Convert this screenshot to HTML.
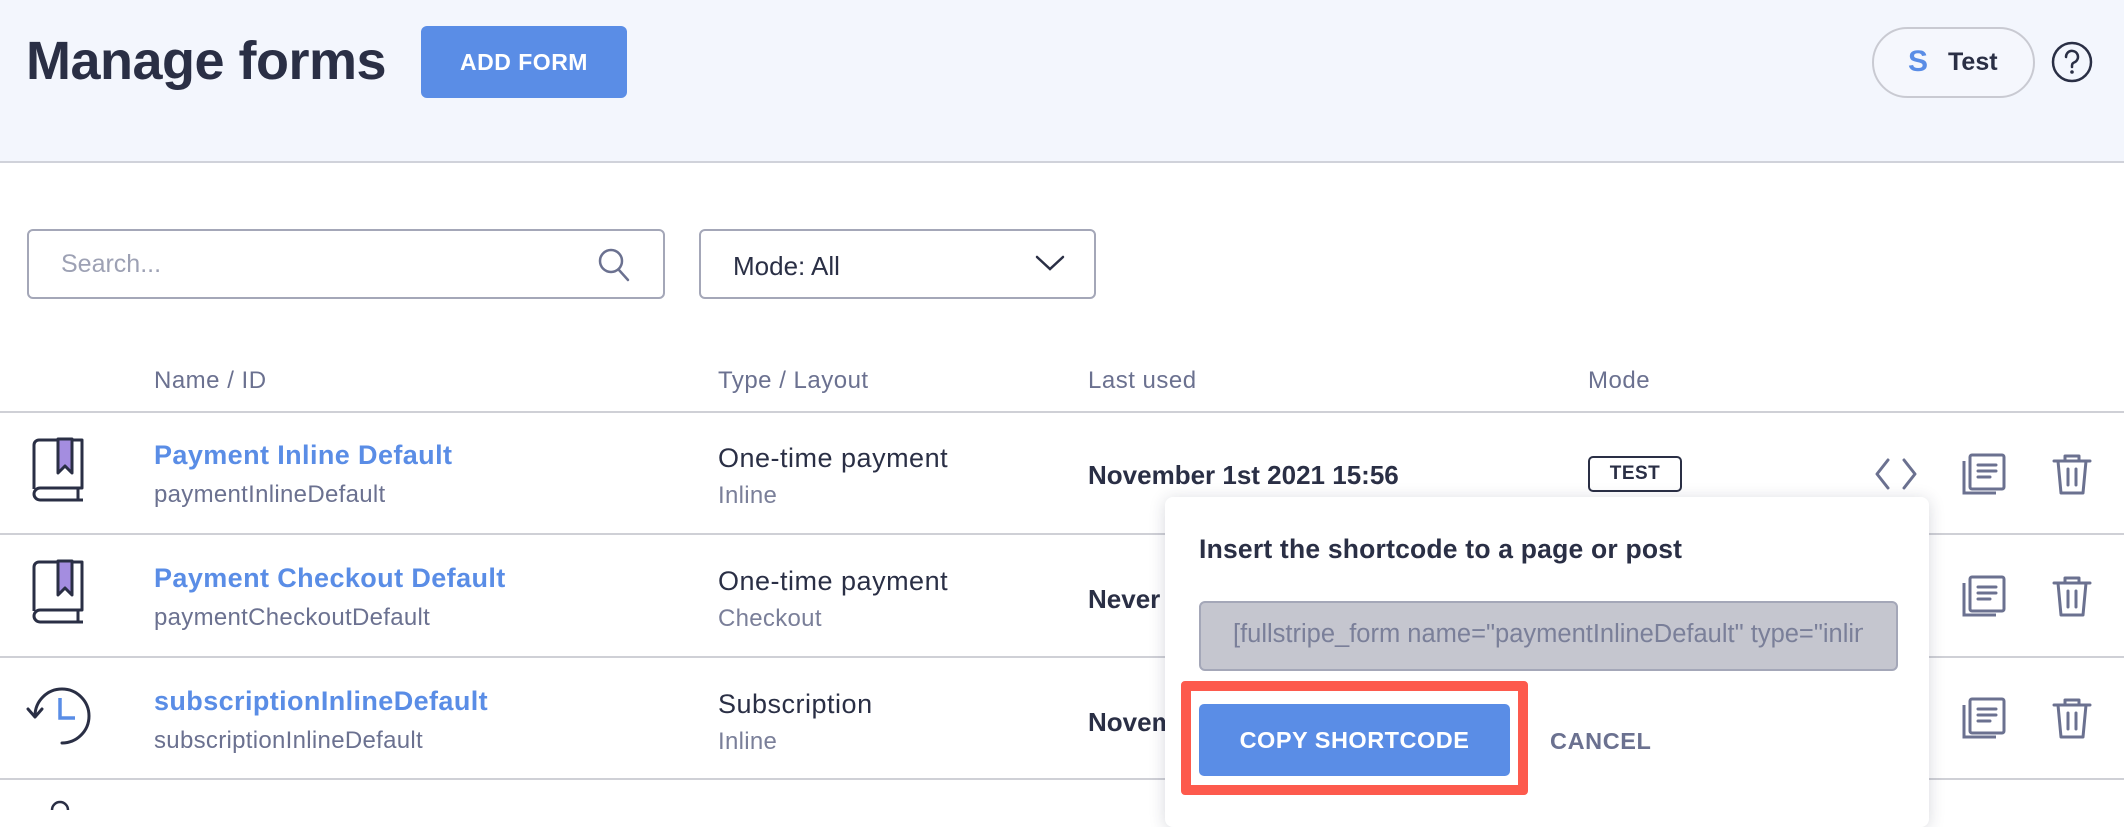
<!DOCTYPE html>
<html><head><meta charset="utf-8"><style>
*{margin:0;padding:0;box-sizing:border-box}
body{width:2124px;height:810px;overflow:hidden;background:#fff;font-family:"Liberation Sans",sans-serif;color:#2a2f45;position:relative}
.a{position:absolute;white-space:nowrap}
.hdr{left:0;top:0;width:2124px;height:163px;background:#f3f6fd;border-bottom:2px solid #d0d2da}
.line{left:0;width:2124px;height:2px;background:#cfd0d6}
.name{font-size:27px;font-weight:bold;color:#5a8de6;letter-spacing:.4px}
.id{font-size:24px;color:#6b7190;letter-spacing:.3px}
.t1{font-size:27px;color:#2a2f45;letter-spacing:.5px}
.t2{font-size:24px;color:#7a7f99;letter-spacing:.3px}
.th{font-size:24px;color:#6b7190;top:367px;letter-spacing:.5px}
.date{font-size:26px;font-weight:bold;color:#2a2f45;letter-spacing:0}
</style></head><body>
<div class="a hdr"></div>
<div class="a" style="left:26px;top:30px;font-size:54px;font-weight:bold;color:#2a2f45;letter-spacing:-.5px">Manage forms</div>
<div class="a" style="left:421px;top:26px;width:206px;height:72px;background:#5a8de6;border-radius:6px;color:#fff;font-weight:bold;font-size:23px;text-align:center;line-height:72px;letter-spacing:.5px">ADD FORM</div>
<div class="a" style="left:1872px;top:27px;width:163px;height:71px;border:2px solid #c9cad2;border-radius:36px;background:#f5f7fd"></div>
<div class="a" style="left:1908px;top:45px;font-size:30px;font-weight:bold;color:#5a8de6">S</div>
<div class="a" style="left:1948px;top:48px;font-size:25px;font-weight:bold;color:#2a2f45">Test</div>
<svg class="a" style="left:2051px;top:41px" width="42" height="42" viewBox="0 0 42 42"><circle cx="21" cy="21" r="19" fill="none" stroke="#2a2f45" stroke-width="2.5"/><path d="M15 16a6 6 0 1 1 8 5.5c-1.5.7-2 1.5-2 3v1.5" fill="none" stroke="#2a2f45" stroke-width="2.5" stroke-linecap="round"/><circle cx="21" cy="31" r="1.8" fill="#2a2f45"/></svg>

<div class="a" style="left:27px;top:229px;width:638px;height:70px;border:2px solid #a4a7b8;border-radius:6px"></div>
<div class="a" style="left:61px;top:250px;font-size:25px;color:#9da1b4">Search...</div>
<svg class="a" style="left:596px;top:246px" width="36" height="38" viewBox="0 0 36 38"><circle cx="15" cy="15" r="11" fill="none" stroke="#6b7190" stroke-width="2.5"/><path d="M23 24l9 10" stroke="#6b7190" stroke-width="2.5" stroke-linecap="round"/></svg>
<div class="a" style="left:699px;top:229px;width:397px;height:70px;border:2px solid #a4a7b8;border-radius:6px"></div>
<div class="a" style="left:733px;top:251px;font-size:26px;color:#2a2f45">Mode: All</div>
<svg class="a" style="left:1034px;top:253px" width="32" height="20" viewBox="0 0 32 20"><path d="M3 4l13 12 13-12" fill="none" stroke="#2a2f45" stroke-width="2.5" stroke-linecap="round"/></svg>

<div class="a th" style="left:154px">Name / ID</div>
<div class="a th" style="left:718px">Type / Layout</div>
<div class="a th" style="left:1088px">Last used</div>
<div class="a th" style="left:1588px">Mode</div>

<div class="a line" style="top:411px"></div>
<div class="a line" style="top:533px"></div>
<div class="a line" style="top:656px"></div>
<div class="a line" style="top:778px"></div>

<svg class="a" style="left:30px;top:436px" width="56" height="68" viewBox="0 0 56 68"><path d="M4 53V9a5 5 0 0 1 5-5h43v48H10a6 6 0 0 0 0 12h43" fill="none" stroke="#2a2f45" stroke-width="3" stroke-linejoin="round"/><path d="M48 52v12" stroke="#2a2f45" stroke-width="3"/><path d="M28 3h14v34l-7-7-7 7z" fill="#a48de0" stroke="#2a2f45" stroke-width="3" stroke-linejoin="round"/></svg>
<svg class="a" style="left:30px;top:558px" width="56" height="68" viewBox="0 0 56 68"><path d="M4 53V9a5 5 0 0 1 5-5h43v48H10a6 6 0 0 0 0 12h43" fill="none" stroke="#2a2f45" stroke-width="3" stroke-linejoin="round"/><path d="M48 52v12" stroke="#2a2f45" stroke-width="3"/><path d="M28 3h14v34l-7-7-7 7z" fill="#a48de0" stroke="#2a2f45" stroke-width="3" stroke-linejoin="round"/></svg>
<svg class="a" style="left:24px;top:684px" width="70" height="66" viewBox="0 0 70 66"><path d="M11 32A27 27 0 1 1 38 59" fill="none" stroke="#2a2f45" stroke-width="3" stroke-linecap="round"/><path d="M4 25l7 8 7-8" fill="none" stroke="#2a2f45" stroke-width="3" stroke-linecap="round" stroke-linejoin="round"/><path d="M36 14v20h15" fill="none" stroke="#5a8de6" stroke-width="3.5"/></svg>
<svg class="a" style="left:50px;top:800px" width="20" height="10"><circle cx="10" cy="10" r="8" fill="none" stroke="#2a2f45" stroke-width="2.5"/></svg>

<div class="a name" style="left:154px;top:440px">Payment Inline Default</div>
<div class="a id" style="left:154px;top:481px">paymentInlineDefault</div>
<div class="a name" style="left:154px;top:563px">Payment Checkout Default</div>
<div class="a id" style="left:154px;top:604px">paymentCheckoutDefault</div>
<div class="a name" style="left:154px;top:686px">subscriptionInlineDefault</div>
<div class="a id" style="left:154px;top:727px">subscriptionInlineDefault</div>

<div class="a t1" style="left:718px;top:443px">One-time payment</div>
<div class="a t2" style="left:718px;top:482px">Inline</div>
<div class="a t1" style="left:718px;top:566px">One-time payment</div>
<div class="a t2" style="left:718px;top:605px">Checkout</div>
<div class="a t1" style="left:718px;top:689px">Subscription</div>
<div class="a t2" style="left:718px;top:728px">Inline</div>

<div class="a date" style="left:1088px;top:460px">November 1st 2021 15:56</div>
<div class="a date" style="left:1088px;top:584px">Never</div>
<div class="a date" style="left:1088px;top:707px">November</div>

<div class="a" style="left:1588px;top:456px;width:94px;height:36px;border:2px solid #2a2f45;border-radius:5px;font-size:19px;font-weight:bold;text-align:center;line-height:32px;letter-spacing:.5px">TEST</div>

<svg class="a" style="left:1872px;top:456px" width="48" height="36" viewBox="0 0 48 36"><path d="M16 4L5 18l11 14M32 4l11 14-11 14" fill="none" stroke="#6b7190" stroke-width="3" stroke-linecap="round" stroke-linejoin="round"/></svg>
<svg class="a" style="left:1960px;top:452px" width="48" height="46" viewBox="0 0 48 46"><rect x="10" y="3" width="34" height="34" rx="2" fill="none" stroke="#6b7190" stroke-width="3"/><path d="M4 9v32h32" fill="none" stroke="#6b7190" stroke-width="3"/><path d="M18 13h18M18 19h18M18 25h12" stroke="#6b7190" stroke-width="3" stroke-linecap="round"/></svg>
<svg class="a" style="left:2050px;top:452px" width="44" height="44" viewBox="0 0 44 44"><path d="M4 9h36M15 9V4h14v5M8 9l3 32h22l3-32M18 17v16M26 17v16" fill="none" stroke="#6b7190" stroke-width="3" stroke-linecap="round" stroke-linejoin="round"/></svg>
<svg class="a" style="left:1960px;top:574px" width="48" height="46" viewBox="0 0 48 46"><rect x="10" y="3" width="34" height="34" rx="2" fill="none" stroke="#6b7190" stroke-width="3"/><path d="M4 9v32h32" fill="none" stroke="#6b7190" stroke-width="3"/><path d="M18 13h18M18 19h18M18 25h12" stroke="#6b7190" stroke-width="3" stroke-linecap="round"/></svg>
<svg class="a" style="left:2050px;top:574px" width="44" height="44" viewBox="0 0 44 44"><path d="M4 9h36M15 9V4h14v5M8 9l3 32h22l3-32M18 17v16M26 17v16" fill="none" stroke="#6b7190" stroke-width="3" stroke-linecap="round" stroke-linejoin="round"/></svg>
<svg class="a" style="left:1960px;top:696px" width="48" height="46" viewBox="0 0 48 46"><rect x="10" y="3" width="34" height="34" rx="2" fill="none" stroke="#6b7190" stroke-width="3"/><path d="M4 9v32h32" fill="none" stroke="#6b7190" stroke-width="3"/><path d="M18 13h18M18 19h18M18 25h12" stroke="#6b7190" stroke-width="3" stroke-linecap="round"/></svg>
<svg class="a" style="left:2050px;top:696px" width="44" height="44" viewBox="0 0 44 44"><path d="M4 9h36M15 9V4h14v5M8 9l3 32h22l3-32M18 17v16M26 17v16" fill="none" stroke="#6b7190" stroke-width="3" stroke-linecap="round" stroke-linejoin="round"/></svg>

<div class="a" style="left:1165px;top:497px;width:764px;height:330px;background:#fff;border-radius:8px;box-shadow:0 2px 16px rgba(40,45,70,.18)"></div>
<div class="a" style="left:1199px;top:534px;font-size:26.5px;font-weight:bold;color:#2a2f45;letter-spacing:.2px">Insert the shortcode to a page or post</div>
<div class="a" style="left:1199px;top:601px;width:699px;height:70px;background:#c5c6cf;border:2px solid #a4a7b8;border-radius:6px;overflow:hidden"></div>
<div class="a" style="left:1233px;top:620px;width:630px;overflow:hidden;font-size:25.5px;color:#7a7f99">[fullstripe_form name="paymentInlineDefault" type="inline_payment"]</div>
<div class="a" style="left:1181px;top:681px;width:347px;height:114px;border:10px solid #fd5a4d;border-radius:4px"></div>
<div class="a" style="left:1199px;top:704px;width:311px;height:72px;background:#5a8de6;border-radius:5px;color:#fff;font-weight:bold;font-size:23.5px;text-align:center;line-height:72px;letter-spacing:.5px">COPY SHORTCODE</div>
<div class="a" style="left:1550px;top:728px;font-size:23.5px;font-weight:bold;color:#6b7190;letter-spacing:.6px">CANCEL</div>
</body></html>
